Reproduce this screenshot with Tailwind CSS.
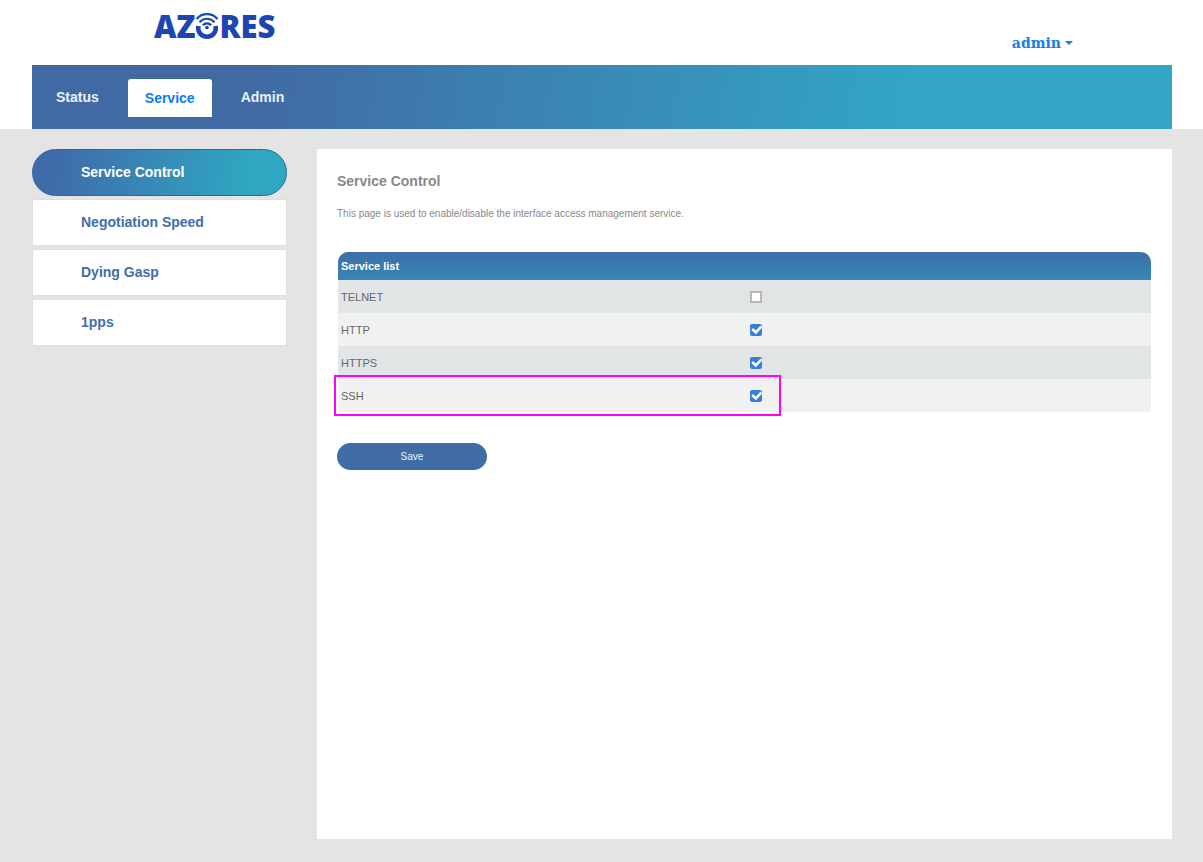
<!DOCTYPE html>
<html lang="en">
<head>
<meta charset="utf-8">
<meta name="viewport" content="width=device-width, initial-scale=1">
<title>Service Control</title>
<script src="https://cdn.jsdelivr.net/npm/@tailwindcss/browser@4"></script>
</head>
<body class="flex min-h-screen flex-col bg-[#e4e4e4] font-['Liberation_Sans',sans-serif]">
<header class="bg-white pr-[31px] pl-8">
  <div class="flex h-[65px] items-start justify-between pr-[99px] pl-[122px]">
    <a href="#" aria-label="AZORES" class="flex items-start pt-1 font-['Open_Sans',sans-serif] text-[31px] leading-11 font-extrabold text-[#1c46b4]">
      <span>AZ</span>
      <svg class="mt-2 h-[28px] w-[24px]" viewBox="0 0 24 28" fill="none" stroke="currentColor" aria-hidden="true">
        <path d="M3.300 14C2.500 20.500 6.500 24.800 12 24.800S21.500 20.500 20.700 14" stroke-width="4.600"/>
        <path d="M1.500 7C7 .6 17 .6 22.500 7M4.500 10.200C8.700 5.600 15.300 5.600 19.500 10.200M7.800 13.300C10.200 10.700 13.800 10.700 16.200 13.300" stroke-width="2.200"/>
        <circle cx="12" cy="15.500" r="1.800" fill="currentColor" stroke="none"/>
      </svg>
      <span>RES</span>
    </a>
    <button type="button" class="mt-[33px] flex items-center gap-1 font-['DejaVu_Serif',serif] text-sm leading-5 font-bold text-[#147cee]">admin
      <svg class="h-1 w-2" viewBox="0 0 8 4" fill="currentColor" aria-hidden="true"><path d="M0 0H8L4 4Z"/></svg>
    </button>
  </div>
  <nav class="flex h-16 items-start bg-linear-[100deg,#416aa5_20%,#32a6c4_77%] pt-[14px] pl-[7px] text-sm leading-[38px] font-bold text-[#e9f2fb]">
    <a href="#" class="px-[17px] leading-9">Status</a>
    <a href="#" aria-current="page" class="ml-3 rounded-t-[3px] bg-white px-[17px] text-[#0b7cf0]">Service</a>
    <a href="#" class="ml-3 px-[17px] leading-9">Admin</a>
  </nav>
</header>
<div class="flex flex-1 gap-[30px] pt-5 pr-[31px] pb-[23px] pl-8">
  <nav class="flex w-[255px] shrink-0 flex-col gap-[3px] text-sm font-bold text-[#416dab]">
    <a href="#" aria-current="page" class="rounded-full border border-[#2b6797] bg-linear-[100deg,#3f6aaa_8%,#2fa7c2_85%] pl-12 leading-[45px] text-white">Service Control</a>
    <a href="#" class="border border-[#dedede] bg-white bg-clip-padding pl-12 leading-[45px]">Negotiation Speed</a>
    <a href="#" class="border border-[#dedede] bg-white bg-clip-padding pl-12 leading-[45px]">Dying Gasp</a>
    <a href="#" class="border border-[#dedede] bg-white bg-clip-padding pl-12 leading-[45px]">1pps</a>
  </nav>
  <main class="min-w-0 flex-1 bg-white px-5 pt-[22px]">
    <h1 class="text-sm leading-5 font-bold text-[#888]">Service Control</h1>
    <p class="mt-[15px] text-[10px] leading-4 text-[#888]">This page is used to enable/disable the interface access management service.</p>
    <form>
      <div class="relative mx-px mt-[30px]">
        <table class="w-full table-fixed border-collapse text-left text-[11px] text-[#666]">
          <thead>
            <tr class="h-7 text-white"><th scope="col" colspan="2" class="rounded-t-[10px] bg-linear-to-b from-[#3c6fa8] to-[#3587b4] px-[3px] py-0 font-bold">Service list</th></tr>
          </thead>
          <tbody>
            <tr class="h-[33px] bg-[#e1e5e6]"><td class="w-1/2 px-[3px] pt-0.5 pb-0"><label for="telnet">TELNET</label></td><td class="px-[5px] py-0"><input id="telnet" type="checkbox" class="block size-3 appearance-none border-2 border-[#b8b8b8] bg-white"></td></tr>
            <tr class="h-[33px] bg-[#f1f1f1]"><td class="px-[3px] pt-0.5 pb-0"><label for="http">HTTP</label></td><td class="px-[5px] py-0"><span class="grid size-3"><input id="http" type="checkbox" checked class="col-start-1 row-start-1 size-3 appearance-none rounded-xs bg-[#367fdd]"><svg class="pointer-events-none col-start-1 row-start-1 size-3" viewBox="0 0 12 12" fill="none" stroke="white" stroke-width="2.600" aria-hidden="true"><path d="M2.200 5L5.800 8.400L11.500 2.500"/></svg></span></td></tr>
            <tr class="h-[33px] bg-[#e1e5e6]"><td class="px-[3px] pt-0.5 pb-0"><label for="https">HTTPS</label></td><td class="px-[5px] py-0"><span class="grid size-3"><input id="https" type="checkbox" checked class="col-start-1 row-start-1 size-3 appearance-none rounded-xs bg-[#367fdd]"><svg class="pointer-events-none col-start-1 row-start-1 size-3" viewBox="0 0 12 12" fill="none" stroke="white" stroke-width="2.600" aria-hidden="true"><path d="M2.200 5L5.800 8.400L11.500 2.500"/></svg></span></td></tr>
            <tr class="h-[33px] bg-[#f1f1f1]"><td class="px-[3px] pt-0.5 pb-0"><label for="ssh">SSH</label></td><td class="px-[5px] py-0"><span class="grid size-3"><input id="ssh" type="checkbox" checked class="col-start-1 row-start-1 size-3 appearance-none rounded-xs bg-[#367fdd]"><svg class="pointer-events-none col-start-1 row-start-1 size-3" viewBox="0 0 12 12" fill="none" stroke="white" stroke-width="2.600" aria-hidden="true"><path d="M2.200 5L5.800 8.400L11.500 2.500"/></svg></span></td></tr>
          </tbody>
        </table>
        <div class="pointer-events-none absolute -bottom-1 -left-1 h-[41px] w-[55%] border-2 border-[#f0f]"></div>
      </div>
      <button type="button" class="mt-[31px] block h-[27px] w-[150px] rounded-full bg-[#416da7] text-[10px] text-[#eaf4ff]">Save</button>
    </form>
  </main>
</div>
</body>
</html>
